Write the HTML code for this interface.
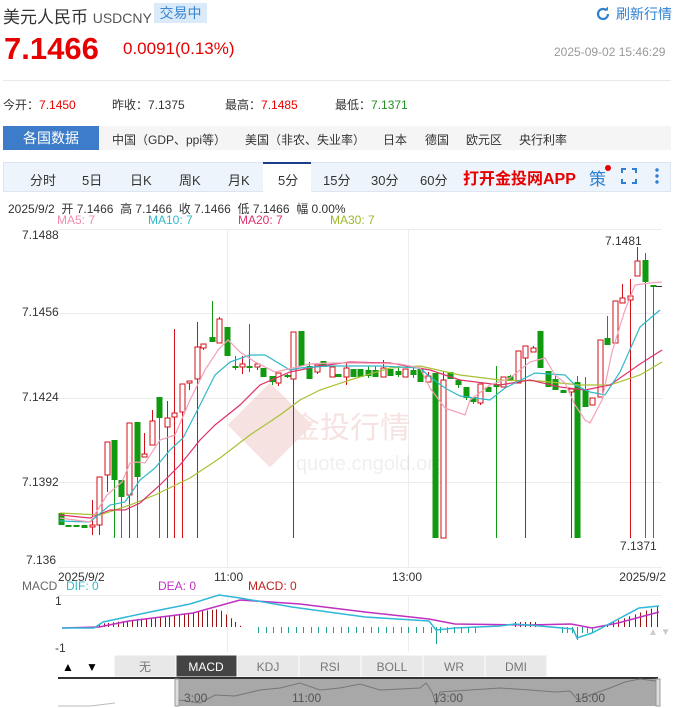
<!DOCTYPE html>
<html><head><meta charset="utf-8">
<style>
*{margin:0;padding:0;box-sizing:border-box}
body{width:674px;height:708px;overflow:hidden;background:#fff;font-family:"Liberation Sans","Noto Sans CJK SC",sans-serif;color:#333;position:relative}
.a{position:absolute;white-space:nowrap}
</style></head><body>
<div class="a" style="left:3px;top:3px;font-size:17px;color:#333">美元人民币 <span style="font-size:14px;color:#555">USDCNY</span></div>
<div class="a" style="left:154px;top:3px;width:53px;height:20px;background:#dbeaf8;color:#3a86d0;font-size:14px;text-align:center;line-height:20px">交易中</div>
<svg class="a" style="left:595px;top:6px" width="16" height="16" viewBox="0 0 16 16"><path d="M13 8a5 5 0 1 1-1.5-3.6" fill="none" stroke="#2f7fd0" stroke-width="2.2"/><path d="M9 4.5h4v-4z" fill="#2f7fd0"/></svg>
<div class="a" style="left:616px;top:4px;font-size:14px;color:#2f7fd0">刷新行情</div>
<div class="a" style="left:4px;top:31px;font-size:31px;font-weight:bold;color:#e60000">7.1466</div>
<div class="a" style="left:123px;top:39px;font-size:17px;color:#e60000">0.0091(0.13%)</div>
<div class="a" style="left:554px;top:45px;font-size:12px;color:#999">2025-09-02 15:46:29</div>
<div class="a" style="left:3px;top:80px;width:668px;height:1px;background:#e8e8e8"></div>
<div class="a" style="left:3px;top:96px;font-size:12px">今开：<span style="color:#e60000">7.1450</span></div>
<div class="a" style="left:112px;top:96px;font-size:12px">昨收：7.1375</div>
<div class="a" style="left:225px;top:96px;font-size:12px">最高：<span style="color:#e60000">7.1485</span></div>
<div class="a" style="left:335px;top:96px;font-size:12px">最低：<span style="color:#209020">7.1371</span></div>
<div class="a" style="left:3px;top:126px;width:668px;height:24px;background:#f5f5f5"></div>
<div class="a" style="left:3px;top:126px;width:96px;height:24px;background:#3d7cc9;color:#fff;font-size:14px;text-align:center;line-height:24px">各国数据</div>
<div class="a" style="left:112px;top:131px;font-size:12px">中国（GDP、ppi等）</div>
<div class="a" style="left:245px;top:131px;font-size:12px">美国（非农、失业率）</div>
<div class="a" style="left:383px;top:131px;font-size:12px">日本</div>
<div class="a" style="left:425px;top:131px;font-size:12px">德国</div>
<div class="a" style="left:466px;top:131px;font-size:12px">欧元区</div>
<div class="a" style="left:519px;top:131px;font-size:12px">央行利率</div>
<div class="a" style="left:3px;top:162px;width:668px;height:30px;background:#eef4fb;border:1px solid #dde6f0"></div>
<div class="a" style="left:263px;top:162px;width:48px;height:31px;background:#fff;border-top:2px solid #1c3f8a"></div>
<div class="a" style="top:170px;font-size:13px;color:#333;left:0;width:674px;height:20px">
<span class="a" style="left:30px">分时</span><span class="a" style="left:82px">5日</span><span class="a" style="left:130px">日K</span><span class="a" style="left:179px">周K</span><span class="a" style="left:228px">月K</span><span class="a" style="left:278px">5分</span><span class="a" style="left:323px">15分</span><span class="a" style="left:371px">30分</span><span class="a" style="left:420px">60分</span>
</div>
<div class="a" style="left:463px;top:165px;font-size:16px;font-weight:bold;color:#e60000">打开金投网APP</div>
<div class="a" style="left:589px;top:165px;font-size:17px;color:#2f7fd0">策</div>
<div class="a" style="left:605px;top:165px;width:6px;height:6px;border-radius:3px;background:#e60000"></div>
<svg class="a" style="left:621px;top:168px" width="16" height="16" viewBox="0 0 16 16" fill="none" stroke="#2f7fd0" stroke-width="2"><path d="M1 5V1h4M11 1h4v4M15 11v4h-4M5 15H1v-4"/></svg>
<svg class="a" style="left:654px;top:167px" width="6" height="18"><circle cx="3" cy="3" r="1.7" fill="#2f7fd0"/><circle cx="3" cy="9" r="1.7" fill="#2f7fd0"/><circle cx="3" cy="15" r="1.7" fill="#2f7fd0"/></svg>
<div class="a" style="left:8px;top:200px;font-size:12px;color:#333">2025/9/2 &nbsp;开 7.1466 &nbsp;高 7.1466 &nbsp;收 7.1466 &nbsp;低 7.1466 &nbsp;幅 0.00%</div>
<div class="a" style="left:57px;top:213px;font-size:12px;color:#f08cb0">MA5: 7</div>
<div class="a" style="left:148px;top:213px;font-size:12px;color:#30b8c8">MA10: 7</div>
<div class="a" style="left:238px;top:213px;font-size:12px;color:#e0306a">MA20: 7</div>
<div class="a" style="left:330px;top:213px;font-size:12px;color:#9ab828">MA30: 7</div>
<svg class="a" style="left:0;top:0" width="674" height="708" id="s">
<g stroke="#ececec" stroke-width="1">
<line x1="58" y1="229.5" x2="662" y2="229.5"/><line x1="58" y1="313.5" x2="662" y2="313.5"/><line x1="58" y1="398.5" x2="662" y2="398.5"/><line x1="58" y1="482.5" x2="662" y2="482.5"/><line x1="58" y1="567.5" x2="662" y2="567.5"/>
<line x1="227.5" y1="229" x2="227.5" y2="567"/><line x1="408.5" y1="229" x2="408.5" y2="567"/>
<line x1="58" y1="595.5" x2="662" y2="595.5"/><line x1="227.5" y1="595" x2="227.5" y2="652"/><line x1="408.5" y1="595" x2="408.5" y2="652"/>
</g>
<g font-family="Liberation Sans,sans-serif" font-size="12" fill="#333">
<text x="22" y="239">7.1488</text><text x="22" y="316">7.1456</text><text x="22" y="401">7.1424</text><text x="22" y="486">7.1392</text><text x="26" y="564">7.136</text>
<text x="58" y="581">2025/9/2</text><text x="214" y="581">11:00</text><text x="392" y="581">13:00</text><text x="666" y="581" text-anchor="end">2025/9/2</text>
<text x="605" y="245">7.1481</text><text x="620" y="550">7.1371</text>
<text x="22" y="590" fill="#666">MACD</text><text x="66" y="590" fill="#30b8c8">DIF: 0</text><text x="158" y="590" fill="#c030c0">DEA: 0</text><text x="248" y="590" fill="#c02020">MACD: 0</text>
<text x="55" y="605">1</text><text x="55" y="652">-1</text>
</g>
<g opacity="0.13">
<rect x="240" y="395" width="60" height="60" transform="rotate(45 270 425)" fill="#c03020"/>
<text x="290" y="438" font-size="30" fill="#c03020" font-family="Noto Sans CJK SC,sans-serif">金投行情</text>
<text x="296" y="470" font-size="20" fill="#888">quote.cngold.org</text>
</g>
<g id="cd"></g>
<text x="648" y="635" fill="#ccc" font-size="10">▲ ▼</text>
<rect x="58" y="655" width="604" height="22" fill="#fff"/>
<text x="62" y="671" font-size="12">▲</text><text x="86" y="671" font-size="12">▼</text>
<g font-size="12" font-family="Liberation Sans,Noto Sans CJK SC,sans-serif" text-anchor="middle" fill="#777">
<rect x="114" y="655" width="62" height="22" fill="#e8e8e8" stroke="#fff"/><text x="145" y="671">无</text>
<rect x="176" y="655" width="61" height="22" fill="#444" stroke="#fff"/><text x="206" y="671" fill="#fff">MACD</text>
<rect x="237" y="655" width="62" height="22" fill="#e8e8e8" stroke="#fff"/><text x="268" y="671">KDJ</text>
<rect x="299" y="655" width="62" height="22" fill="#e8e8e8" stroke="#fff"/><text x="330" y="671">RSI</text>
<rect x="361" y="655" width="62" height="22" fill="#e8e8e8" stroke="#fff"/><text x="392" y="671">BOLL</text>
<rect x="423" y="655" width="62" height="22" fill="#e8e8e8" stroke="#fff"/><text x="454" y="671">WR</text>
<rect x="485" y="655" width="62" height="22" fill="#e8e8e8" stroke="#fff"/><text x="516" y="671">DMI</text>
</g>
<rect x="58" y="677" width="600" height="2" fill="#333"/>
<rect x="177" y="679" width="481" height="27" fill="#a8a8a8"/>
<rect x="175" y="679" width="4" height="27" fill="#ddd" stroke="#999"/>
<rect x="656" y="679" width="4" height="27" fill="#ddd" stroke="#999"/>
<polyline fill="none" stroke="#777" points="179,700 200,703 215,695 235,696 260,690 280,688 300,683 320,690 340,688 360,684 380,690 420,688 426,683 432,692 436,704 440,692 470,690 500,688 530,690 555,692 570,691 578,700 590,695 610,688 625,682 640,679 656,681"/>
<g font-size="12" fill="#555"><text x="184" y="702">3:00</text><text x="292" y="702">11:00</text><text x="433" y="702">13:00</text><text x="575" y="702">15:00</text></g>
<polyline fill="none" stroke="#bbb" points="58,706 90,706 115,703"/>
</svg>
<script>
var C=[[61,513,525,513,525],[68,525,525,525,525],[76,525,525,525,525],[84,525,528,525,528],[92,527,525,500,535],[99,525,477,477,535],[107,475,442,442,492],[114,440,480,440,538],[121,480,497,480,538],[129,495,423,423,538],[137,422,477,422,538],[144,457,454,433,457],[152,445,421,410,445],[159,397,418,397,538],[167,427,418,401,538],[174,417,413,329,538],[182,412,384,384,538],[189,383,381,381,390],[197,379,347,322,538],[203,348,344,344,350],[212,337,342,301,342],[219,343,319,317,343],[227,327,356,327,356],[235,366,367,356,370],[242,367,364,356,374],[249,366,367,324,372],[257,367,364,364,370],[263,368,377,368,377],[272,376,382,376,385],[278,383,373,373,386],[287,375,377,374,378],[293,379,332,332,538],[301,331,366,331,366],[309,366,379,362,379],[317,372,365,365,374],[323,361,367,361,367],[332,377,367,367,377],[338,374,377,374,377],[346,377,368,362,385],[353,369,377,369,377],[360,369,377,369,377],[368,370,376,366,378],[375,370,377,366,377],[383,377,368,360,377],[390,369,376,369,376],[398,371,375,366,377],[405,377,369,369,377],[413,370,375,366,378],[420,369,382,369,382],[428,382,376,372,382],[435,373,538,373,538],[443,538,380,372,538],[450,372,379,372,379],[458,380,385,380,388],[466,387,398,387,400],[473,397,402,397,404],[480,403,384,384,405],[488,387,392,386,392],[496,384,387,366,538],[503,387,377,377,387],[510,376,381,375,381],[518,383,351,351,383],[525,358,346,346,538],[533,352,348,346,352],[540,331,368,331,368],[548,371,387,371,387],[555,379,390,376,390],[563,390,393,390,393],[571,392,389,389,538],[577,382,538,376,538],[585,390,407,377,407],[592,405,398,398,405],[600,397,340,340,397],[607,338,345,316,345],[615,343,301,301,343],[622,303,298,284,303],[630,300,296,279,538],[637,276,261,247,276],[645,260,282,253,538],[653,285,287,285,538]];
var s='';C.forEach(function(c){var x=c[0],o=c[1],cl=c[2],h=c[3],l=c[4];var up=cl<o;var col=up?'#d0101a':'#109a10';s+='<line x1="'+(x+.5)+'" y1="'+h+'" x2="'+(x+.5)+'" y2="'+l+'" stroke="'+col+'"/>';var t=Math.min(o,cl),b=Math.max(o,cl);if(b-t<2){b=t+2}
if(up)s+='<rect x="'+(x-2)+'" y="'+t+'" width="5" height="'+(b-t)+'" fill="#fff" stroke="'+col+'"/>';else s+='<rect x="'+(x-2.5)+'" y="'+t+'" width="6" height="'+(b-t)+'" fill="'+col+'"/>';});
function pl(p,c,w){return '<polyline fill="none" stroke="'+c+'" stroke-width="'+(w||1.2)+'" points="'+p+'"/>';}
s+=pl("60,513 100,515 130,505 155,495 190,478 220,458 250,435 280,415 300,400 320,390 350,380 390,368 420,366 460,375 500,380 540,381 580,385 610,385 640,375 662,362","#a8c030");
s+=pl("60,515 90,518 110,510 125,510 140,503 160,485 180,465 200,440 215,425 240,405 260,385 290,372 320,366 350,362 390,363 430,370 460,380 500,385 530,380 560,387 585,390 610,385 640,364 662,350","#e0306a");
s+=pl("60,521 90,522 110,505 125,502 140,480 155,468 170,450 183,438 200,405 215,375 230,362 250,355 265,355 290,370 300,368 330,366 380,366 420,368 430,377 445,388 460,396 490,400 505,388 535,373 565,375 575,385 590,392 605,395 620,372 640,327 660,310","#30b8c8");
s+=pl("60,518 90,522 107,495 122,482 130,463 137,462 145,463 160,440 175,435 190,400 205,370 218,350 228,340 240,352 255,362 275,372 293,368 310,364 330,363 360,363 400,364 420,368 430,388 445,408 465,415 470,400 490,385 510,378 530,362 545,358 555,375 565,383 575,405 585,420 590,423 602,400 612,352 625,310 635,285 650,283 662,282","#f4a0b8");
s+='<line x1="656" y1="286.5" x2="662" y2="286.5" stroke="#333"/>';
// MACD hist
function bar(x,h,c){s+='<line x1="'+x+'" y1="627" x2="'+x+'" y2="'+(627-h)+'" stroke="'+c+'"/>';}
for(var x=99;x<=240;x+=4.7){var h=x<219?3+(x-99)/120*15:18-(x-219)*0.8;bar(Math.round(x)+.5,Math.max(1,h),'#a01010');}
for(var x=258;x<=433;x+=7.5){bar(Math.round(x)+.5,-6,'#20a090');}
bar(436.5,-17,'#20a090');for(var x=440;x<=476;x+=7){bar(Math.round(x)+.5,-6,'#20a090');}
for(var x=515;x<=536;x+=5){bar(x+.5,5,'#a01010');}
for(var x=562;x<=592;x+=5){bar(x+.5,x==577?-13:-6,'#20a090');}
for(var x=607;x<=659;x+=5.5){bar(Math.round(x)+.5,3+(x-607)*0.35,'#a01010');}
s+=pl("62,628 99,627 129,621 193,613 240,600 300,604 365,612 429,619 455,624 528,625 571,624 592,628 618,623 659,612","#c030c0",1.5);
s+=pl("62,628 94,628 103,622 150,612 190,604 219,595 240,598 292,607 365,617 429,621 436,630 455,628 500,626 515,624 540,626 573,629 577,638 592,633 609,624 639,608 659,606","#30b8d8",1.5);
document.getElementById('cd').innerHTML=s;
</script>
</body></html>
